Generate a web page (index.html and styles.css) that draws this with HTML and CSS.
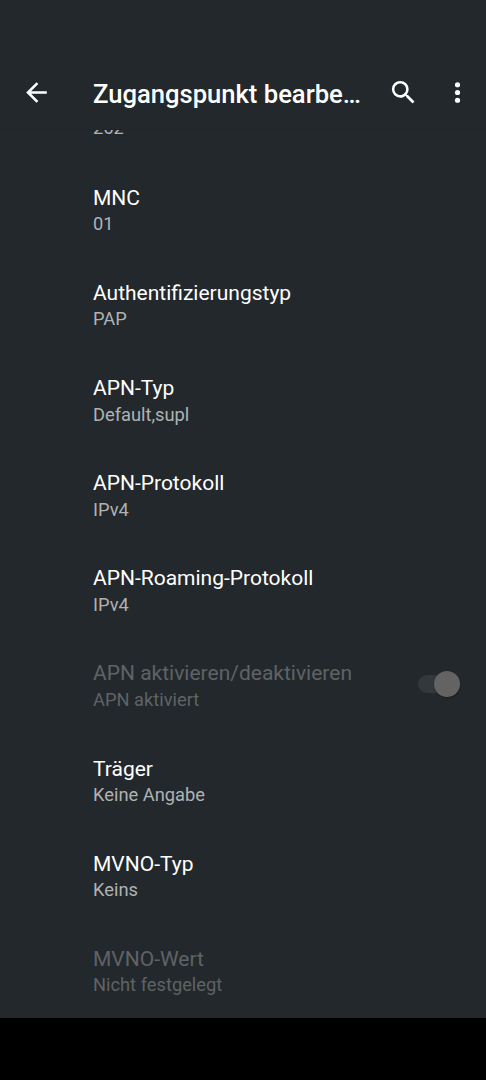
FILE: index.html
```html
<!DOCTYPE html>
<html lang="de">

<head>
    <meta charset="utf-8">
    <title>Zugangspunkt bearbeiten</title>
    <link rel="stylesheet" href="styles.css">
</head>

<body>
    <header class="toolbar">
        <svg class="icon back" viewBox="0 0 24 24"><path d="M20 11H7.83l5.59-5.59L12 4l-8 8 8 8 1.41-1.41L7.83 13H20v-2z"/></svg>
        <h1>Zugangspunkt bearbe…</h1>
        <svg class="icon search" viewBox="0 0 24 24"><path d="M15.5 14h-.79l-.28-.27A6.471 6.471 0 0 0 16 9.5 6.5 6.5 0 1 0 9.5 16c1.61 0 3.09-.59 4.23-1.57l.27.28v.79l5 4.99L20.49 19l-4.99-5zm-6 0C7.01 14 5 11.99 5 9.5S7.01 5 9.5 5 14 7.01 14 9.5 11.99 14 9.5 14z"/></svg>
        <svg class="icon more" viewBox="0 0 24 24"><circle cx="12" cy="6" r="2"/><circle cx="12" cy="12" r="2"/><circle cx="12" cy="18" r="2"/></svg>
    </header>
    <main class="list">
        <div class="row scrolled">
            <div class="summary">262</div>
        </div>
        <div class="row">
            <div class="title">MNC</div>
            <div class="summary">01</div>
        </div>
        <div class="row">
            <div class="title">Authentifizierungstyp</div>
            <div class="summary">PAP</div>
        </div>
        <div class="row">
            <div class="title">APN-Typ</div>
            <div class="summary">Default,supl</div>
        </div>
        <div class="row">
            <div class="title">APN-Protokoll</div>
            <div class="summary">IPv4</div>
        </div>
        <div class="row">
            <div class="title">APN-Roaming-Protokoll</div>
            <div class="summary">IPv4</div>
        </div>
        <div class="row disabled with-switch">
            <div>
                <div class="title">APN aktivieren/deaktivieren</div>
                <div class="summary">APN aktiviert</div>
            </div>
            <div class="switch"><div class="thumb"></div></div>
        </div>
        <div class="row">
            <div class="title">Träger</div>
            <div class="summary">Keine Angabe</div>
        </div>
        <div class="row">
            <div class="title">MVNO-Typ</div>
            <div class="summary">Keins</div>
        </div>
        <div class="row disabled">
            <div class="title">MVNO-Wert</div>
            <div class="summary">Nicht festgelegt</div>
        </div>
    </main>
    <footer class="navbar"></footer>
</body>

</html>
```

FILE: styles.css
```css
* {
    box-sizing: border-box;
}

body {
    margin: 0;
    height: 1080px;
    display: flex;
    flex-direction: column;
    overflow: hidden;
    background: #23282c;
    color: #fff;
    font-family: Roboto, "Liberation Sans", sans-serif;
}

.toolbar {
    flex: none;
    height: 130px;
    /* status bar space on top */
    padding: 56px 13px 0 21px;
    display: flex;
    align-items: center;
    border-bottom: 1px solid #202529;
}

.toolbar h1 {
    margin: 0 0 0 41px;
    padding-top: 3px;
    width: 282px;
    font-size: 25.6px;
    font-weight: 500;
    line-height: 32px;
    white-space: nowrap;
}

.icon {
    flex: none;
    width: 31px;
    height: 31px;
    fill: #fff;
}

.search {
    margin-left: 13px;
}

.more {
    margin-left: 23px;
}

.list {
    flex: 1;
    min-height: 0;
    overflow: hidden;
    display: flex;
    flex-direction: column;
    /* scrolled to the end */
    justify-content: flex-end;
}

.row {
    flex: none;
    height: 95.15px;
    padding: 22px 26px 0 93px;
}

.scrolled {
    padding-top: 49px;
}

.title {
    font-size: 21px;
    line-height: 28px;
}

.summary {
    margin-top: -.5px;
    font-size: 18.3px;
    line-height: 26px;
    color: #b0b2b3;
}

.disabled .title,
.disabled .summary {
    color: #5f6365;
}

.with-switch {
    display: flex;
    justify-content: space-between;
}

.switch {
    width: 42px;
    height: 18px;
    margin-top: 15.5px;
    border-radius: 9px;
    background: #33383c;
    display: flex;
    align-items: center;
    justify-content: flex-end;
}

.thumb {
    flex: none;
    width: 26px;
    height: 26px;
    border-radius: 50%;
    background: #636363;
    box-shadow: 0 1px 2px rgba(0, 0, 0, .3);
}

.navbar {
    flex: none;
    height: 62px;
    background: #000;
}
```
